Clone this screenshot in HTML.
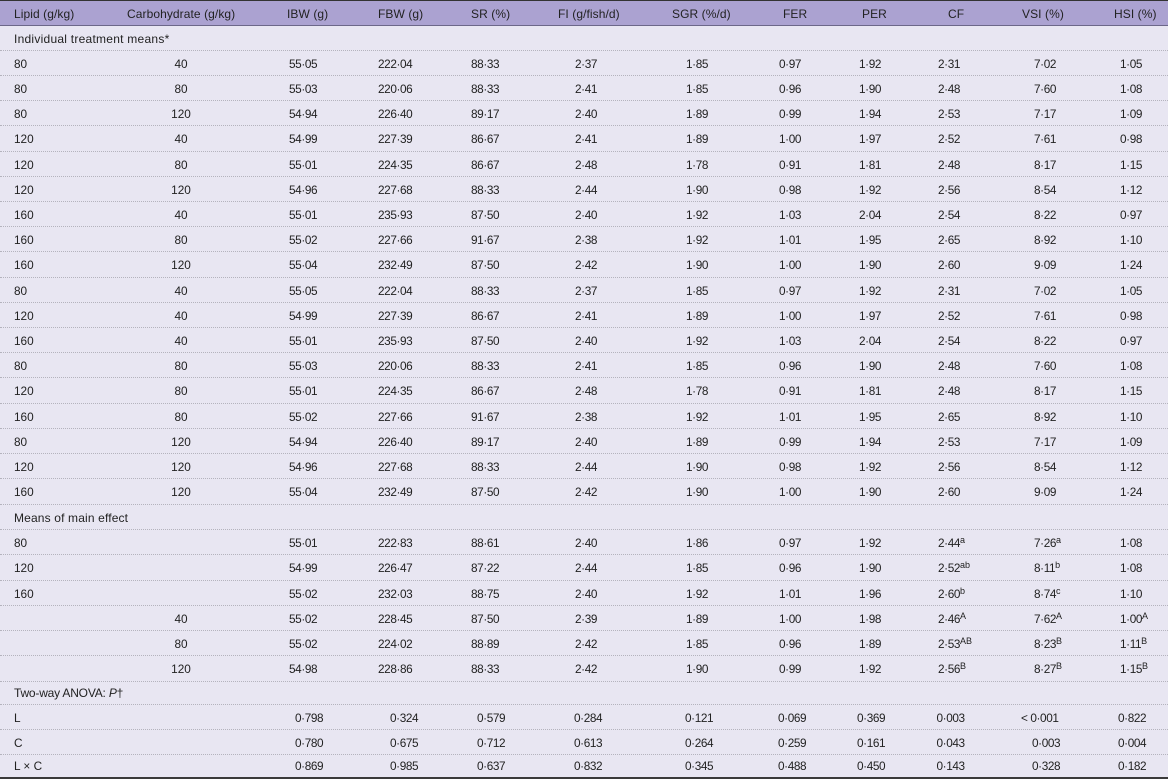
<!DOCTYPE html>
<html><head><meta charset="utf-8"><style>
html,body{margin:0;padding:0}
body{width:1168px;height:779px;background:#e8e6f2;position:relative;overflow:hidden;font-family:"Liberation Sans",sans-serif;font-size:11.8px;letter-spacing:-.4px;color:#222}
.r{position:absolute;left:0;width:1168px;border-bottom:1px dotted #b4b3bd;box-sizing:border-box}
.r span{position:absolute;top:1px;white-space:nowrap}
.r span:nth-child(1){left:14px;letter-spacing:0}
.r span:nth-child(2){left:131px;width:100px;text-align:center;letter-spacing:0}
.r span:nth-child(3){left:289px}
.r span:nth-child(4){left:378px}
.r span:nth-child(5){left:471px}
.r span:nth-child(6){left:575px}
.r span:nth-child(7){left:686px}
.r span:nth-child(8){left:779px}
.r span:nth-child(9){left:859px}
.r span:nth-child(10){left:938px}
.r span:nth-child(11){left:1034px}
.r span:nth-child(12){left:1120px}
.p span:nth-child(3){left:295px}
.p span:nth-child(4){left:390px}
.p span:nth-child(5){left:477px}
.p span:nth-child(6){left:574px}
.p span:nth-child(7){left:685px}
.p span:nth-child(8){left:778px}
.p span:nth-child(9){left:857px}
.p span:nth-child(10){left:936.5px}
.p span:nth-child(11){left:1032px}
.p span:nth-child(12){left:1118px}
.r.g span:nth-child(1){font-size:12px;letter-spacing:.25px}
sup{font-size:9px;letter-spacing:0;line-height:0;vertical-align:4px}
#h{position:absolute;left:0;top:0;width:1168px;height:26px;background:#aba2d1;border-top:1.5px solid #333;border-bottom:1.5px solid #6c6789;box-sizing:border-box;font-size:12px;letter-spacing:.08px;line-height:26px}
#h span{position:absolute;top:0;white-space:nowrap}
#end{position:absolute;left:0;top:777px;width:1168px;height:2px;background:#3a3a3a}
</style></head><body>
<div id="h"><span style="left:14px">Lipid (g/kg)</span><span style="left:127px">Carbohydrate (g/kg)</span><span style="left:287px">IBW (g)</span><span style="left:378px">FBW (g)</span><span style="left:471px">SR (%)</span><span style="left:558px">FI (g/fish/d)</span><span style="left:672px">SGR (%/d)</span><span style="left:783px">FER</span><span style="left:862px">PER</span><span style="left:948px">CF</span><span style="left:1022px">VSI (%)</span><span style="left:1114px">HSI (%)</span></div>
<div class="r g" style="top:26px;height:25px;line-height:24px"><span>Individual treatment means*</span></div>
<div class="r" style="top:51px;height:25px;line-height:25px"><span>80</span><span>40</span><span>55·05</span><span>222·04</span><span>88·33</span><span>2·37</span><span>1·85</span><span>0·97</span><span>1·92</span><span>2·31</span><span>7·02</span><span>1·05</span></div>
<div class="r" style="top:76px;height:25px;line-height:25px"><span>80</span><span>80</span><span>55·03</span><span>220·06</span><span>88·33</span><span>2·41</span><span>1·85</span><span>0·96</span><span>1·90</span><span>2·48</span><span>7·60</span><span>1·08</span></div>
<div class="r" style="top:101px;height:25px;line-height:25px"><span>80</span><span>120</span><span>54·94</span><span>226·40</span><span>89·17</span><span>2·40</span><span>1·89</span><span>0·99</span><span>1·94</span><span>2·53</span><span>7·17</span><span>1·09</span></div>
<div class="r" style="top:126px;height:26px;line-height:25px"><span>120</span><span>40</span><span>54·99</span><span>227·39</span><span>86·67</span><span>2·41</span><span>1·89</span><span>1·00</span><span>1·97</span><span>2·52</span><span>7·61</span><span>0·98</span></div>
<div class="r" style="top:152px;height:25px;line-height:25px"><span>120</span><span>80</span><span>55·01</span><span>224·35</span><span>86·67</span><span>2·48</span><span>1·78</span><span>0·91</span><span>1·81</span><span>2·48</span><span>8·17</span><span>1·15</span></div>
<div class="r" style="top:177px;height:25px;line-height:25px"><span>120</span><span>120</span><span>54·96</span><span>227·68</span><span>88·33</span><span>2·44</span><span>1·90</span><span>0·98</span><span>1·92</span><span>2·56</span><span>8·54</span><span>1·12</span></div>
<div class="r" style="top:202px;height:25px;line-height:25px"><span>160</span><span>40</span><span>55·01</span><span>235·93</span><span>87·50</span><span>2·40</span><span>1·92</span><span>1·03</span><span>2·04</span><span>2·54</span><span>8·22</span><span>0·97</span></div>
<div class="r" style="top:227px;height:25px;line-height:25px"><span>160</span><span>80</span><span>55·02</span><span>227·66</span><span>91·67</span><span>2·38</span><span>1·92</span><span>1·01</span><span>1·95</span><span>2·65</span><span>8·92</span><span>1·10</span></div>
<div class="r" style="top:252px;height:26px;line-height:25px"><span>160</span><span>120</span><span>55·04</span><span>232·49</span><span>87·50</span><span>2·42</span><span>1·90</span><span>1·00</span><span>1·90</span><span>2·60</span><span>9·09</span><span>1·24</span></div>
<div class="r" style="top:278px;height:25px;line-height:25px"><span>80</span><span>40</span><span>55·05</span><span>222·04</span><span>88·33</span><span>2·37</span><span>1·85</span><span>0·97</span><span>1·92</span><span>2·31</span><span>7·02</span><span>1·05</span></div>
<div class="r" style="top:303px;height:25px;line-height:25px"><span>120</span><span>40</span><span>54·99</span><span>227·39</span><span>86·67</span><span>2·41</span><span>1·89</span><span>1·00</span><span>1·97</span><span>2·52</span><span>7·61</span><span>0·98</span></div>
<div class="r" style="top:328px;height:25px;line-height:25px"><span>160</span><span>40</span><span>55·01</span><span>235·93</span><span>87·50</span><span>2·40</span><span>1·92</span><span>1·03</span><span>2·04</span><span>2·54</span><span>8·22</span><span>0·97</span></div>
<div class="r" style="top:353px;height:25px;line-height:25px"><span>80</span><span>80</span><span>55·03</span><span>220·06</span><span>88·33</span><span>2·41</span><span>1·85</span><span>0·96</span><span>1·90</span><span>2·48</span><span>7·60</span><span>1·08</span></div>
<div class="r" style="top:378px;height:26px;line-height:25px"><span>120</span><span>80</span><span>55·01</span><span>224·35</span><span>86·67</span><span>2·48</span><span>1·78</span><span>0·91</span><span>1·81</span><span>2·48</span><span>8·17</span><span>1·15</span></div>
<div class="r" style="top:404px;height:25px;line-height:25px"><span>160</span><span>80</span><span>55·02</span><span>227·66</span><span>91·67</span><span>2·38</span><span>1·92</span><span>1·01</span><span>1·95</span><span>2·65</span><span>8·92</span><span>1·10</span></div>
<div class="r" style="top:429px;height:25px;line-height:25px"><span>80</span><span>120</span><span>54·94</span><span>226·40</span><span>89·17</span><span>2·40</span><span>1·89</span><span>0·99</span><span>1·94</span><span>2·53</span><span>7·17</span><span>1·09</span></div>
<div class="r" style="top:454px;height:25px;line-height:25px"><span>120</span><span>120</span><span>54·96</span><span>227·68</span><span>88·33</span><span>2·44</span><span>1·90</span><span>0·98</span><span>1·92</span><span>2·56</span><span>8·54</span><span>1·12</span></div>
<div class="r" style="top:479px;height:26px;line-height:25px"><span>160</span><span>120</span><span>55·04</span><span>232·49</span><span>87·50</span><span>2·42</span><span>1·90</span><span>1·00</span><span>1·90</span><span>2·60</span><span>9·09</span><span>1·24</span></div>
<div class="r g" style="top:505px;height:25px;line-height:25px"><span style="letter-spacing:.15px">Means of main effect</span></div>
<div class="r" style="top:530px;height:25px;line-height:25px"><span>80</span><span></span><span>55·01</span><span>222·83</span><span>88·61</span><span>2·40</span><span>1·86</span><span>0·97</span><span>1·92</span><span>2·44<sup>a</sup></span><span>7·26<sup>a</sup></span><span>1·08</span></div>
<div class="r" style="top:555px;height:26px;line-height:25px"><span>120</span><span></span><span>54·99</span><span>226·47</span><span>87·22</span><span>2·44</span><span>1·85</span><span>0·96</span><span>1·90</span><span>2·52<sup>ab</sup></span><span>8·11<sup>b</sup></span><span>1·08</span></div>
<div class="r" style="top:581px;height:25px;line-height:24px"><span>160</span><span></span><span>55·02</span><span>232·03</span><span>88·75</span><span>2·40</span><span>1·92</span><span>1·01</span><span>1·96</span><span>2·60<sup>b</sup></span><span>8·74<sup>c</sup></span><span>1·10</span></div>
<div class="r" style="top:606px;height:25px;line-height:24px"><span></span><span>40</span><span>55·02</span><span>228·45</span><span>87·50</span><span>2·39</span><span>1·89</span><span>1·00</span><span>1·98</span><span>2·46<sup>A</sup></span><span>7·62<sup>A</sup></span><span>1·00<sup>A</sup></span></div>
<div class="r" style="top:631px;height:25px;line-height:25px"><span></span><span>80</span><span>55·02</span><span>224·02</span><span>88·89</span><span>2·42</span><span>1·85</span><span>0·96</span><span>1·89</span><span>2·53<sup>AB</sup></span><span>8·23<sup>B</sup></span><span>1·11<sup>B</sup></span></div>
<div class="r" style="top:656px;height:26px;line-height:25px"><span></span><span>120</span><span>54·98</span><span>228·86</span><span>88·33</span><span>2·42</span><span>1·90</span><span>0·99</span><span>1·92</span><span>2·56<sup>B</sup></span><span>8·27<sup>B</sup></span><span>1·15<sup>B</sup></span></div>
<div class="r g" style="top:682px;height:23px;line-height:21px"><span style="letter-spacing:-.2px">Two-way ANOVA: <i>P</i>†</span></div>
<div class="r p" style="top:705px;height:25px;line-height:24px"><span>L</span><span></span><span>0·798</span><span>0·324</span><span>0·579</span><span>0·284</span><span>0·121</span><span>0·069</span><span>0·369</span><span>0·003</span><span style="left:1021px">&lt; 0·001</span><span>0·822</span></div>
<div class="r p" style="top:730px;height:25px;line-height:24px"><span>C</span><span></span><span>0·780</span><span>0·675</span><span>0·712</span><span>0·613</span><span>0·264</span><span>0·259</span><span>0·161</span><span>0·043</span><span>0·003</span><span>0·004</span></div>
<div class="r p" style="top:755px;height:23px;line-height:21px;border:0"><span>L × C</span><span></span><span>0·869</span><span>0·985</span><span>0·637</span><span>0·832</span><span>0·345</span><span>0·488</span><span>0·450</span><span>0·143</span><span>0·328</span><span>0·182</span></div>
<div id="end"></div>
</body></html>
